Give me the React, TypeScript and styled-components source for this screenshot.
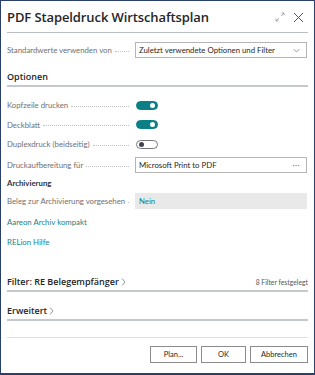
import React from "react";
import styled, { createGlobalStyle } from "styled-components";

const GlobalStyle = createGlobalStyle`
  html, body { margin: 0; padding: 0; background: #ffffff; }
  body { font-family: "Lato", "Open Sans", "Liberation Sans", sans-serif; color: #212121; }
  * { box-sizing: border-box; }
`;

const Frame = styled.div`
  width: 315px;
  height: 375px;
  border: 1px solid #2a3f6b;
  border-bottom: 2px solid #2a3f6b;
  margin: 0;
  padding: 0 6px 0 6px;
  display: flex;
  flex-direction: column;
  background: #fff;
`;

const Header = styled.div`
  height: 32px;
  display: flex;
  align-items: center;
  justify-content: space-between;
  border-bottom: 1px solid #b9bdc5;
  padding-top: 1px;
`;

const Title = styled.div`
  font-family: "Open Sans", "Noto Sans", sans-serif;
  font-size: 13px;
  font-weight: 600;
  color: #262626;
  letter-spacing: -0.1px;
`;

const HeaderIcons = styled.div`
  display: flex;
  align-items: center;
  gap: 8px;
  padding-right: 4px;
`;

const Row = styled.div<{ $mt?: number }>`
  display: grid;
  grid-template-columns: 122px 172px;
  column-gap: 6px;
  align-items: center;
  margin-top: ${(p) => p.$mt ?? 0}px;
  height: 16px;
`;

const LabelCell = styled.div`
  display: flex;
  align-items: center;
  gap: 3px;
  overflow: hidden;
  font-size: 7.8px;
  color: #707070;
  white-space: nowrap;
`;

const Leader = styled.span`
  flex: 1;
  height: 0;
  border-bottom: 1px dotted #c4c4c4;
  margin-top: 2px;
`;

const Box = styled.div<{ $grey?: boolean }>`
  height: 16px;
  border: ${(p) => (p.$grey ? "1px solid #e9e9e9" : "1px solid #b5b5b5")};
  background: ${(p) => (p.$grey ? "#e9e9e9" : "#fff")};
  display: flex;
  align-items: center;
  justify-content: space-between;
  padding: 0 6px 0 3px;
  font-size: 7.8px;
  color: #262626;
  white-space: nowrap;
`;

const TealValue = styled.span`
  color: #0e7e84;
`;

const SectionTitle = styled.div<{ $mt: number }>`
  margin-top: ${(p) => p.$mt}px;
  height: 19px;
  border-bottom: 2px solid #c5c8ce;
  display: flex;
  align-items: center;
  justify-content: space-between;
  font-family: "Open Sans", "Noto Sans", sans-serif;
  font-size: 9px;
  font-weight: 600;
  color: #262626;
`;

const SectionLabel = styled.span`
  display: flex;
  align-items: center;
  gap: 2px;
`;

const FilterNote = styled.span`
  font-family: "Lato", sans-serif;
  font-size: 6.8px;
  font-weight: 400;
  color: #555;
`;

const SubHeading = styled.div<{ $mt: number }>`
  margin-top: ${(p) => p.$mt}px;
  font-size: 7.8px;
  font-weight: 700;
  color: #333;
  height: 12px;
  display: flex;
  align-items: center;
`;

const Link = styled.div<{ $mt: number }>`
  margin-top: ${(p) => p.$mt}px;
  font-size: 7.8px;
  color: #15838a;
  height: 12px;
  display: flex;
  align-items: center;
`;

const Toggle = styled.div<{ $on: boolean }>`
  width: 22px;
  height: 9px;
  border-radius: 5px;
  position: relative;
  margin-left: 1px;
  background: ${(p) => (p.$on ? "#0b7f85" : "#fff")};
  border: 1px solid ${(p) => (p.$on ? "#0b7f85" : "#777")};
  &::after {
    content: "";
    position: absolute;
    top: 1px;
    width: 5px;
    height: 5px;
    border-radius: 50%;
    background: ${(p) => (p.$on ? "#fff" : "#3e4350")};
    ${(p) => (p.$on ? "right: 2px;" : "left: 2px;")}
  }
`;

const Spacer = styled.div`
  flex: 1;
`;

const Footer = styled.div`
  border-top: 1px solid #e2e2e2;
  height: 32px;
  display: flex;
  justify-content: flex-end;
  align-items: center;
  gap: 4px;
  padding-top: 1px;
  margin-bottom: 4px;
`;

const Button = styled.button<{ $w: number }>`
  width: ${(p) => p.$w}px;
  height: 17px;
  background: #fff;
  border: 1px solid #8c8c8c;
  font-family: inherit;
  font-size: 7.5px;
  color: #262626;
  padding: 0;
`;

const Chevron = () => (
  <svg width="7" height="5" viewBox="0 0 7 5">
    <path d="M0.5 1 L3.5 4 L6.5 1" fill="none" stroke="#888" strokeWidth="0.8" />
  </svg>
);

const RightChevron = () => (
  <svg width="5" height="8" viewBox="0 0 5 8">
    <path d="M1 0.5 L4 4 L1 7.5" fill="none" stroke="#888" strokeWidth="0.9" />
  </svg>
);

const LabelRow = ({ label, children, mt }: { label: string; children: React.ReactNode; mt?: number }) => (
  <Row $mt={mt}>
    <LabelCell>
      <span>{label}</span>
      <Leader />
    </LabelCell>
    <div>{children}</div>
  </Row>
);

export default function App() {
  return (
    <>
      <GlobalStyle />
      <Frame>
        <Header>
          <Title>PDF Stapeldruck Wirtschaftsplan</Title>
          <HeaderIcons>
            <svg width="10" height="10" viewBox="0 0 10 10">
              <path d="M1 9 L4 6 M6 4 L9 1 M6.5 1 H9 V3.5 M1 6.5 V9 H3.5" fill="none" stroke="#999" strokeWidth="0.8" />
            </svg>
            <svg width="11" height="11" viewBox="0 0 11 11">
              <path d="M1 1 L10 10 M10 1 L1 10" fill="none" stroke="#555" strokeWidth="1" />
            </svg>
          </HeaderIcons>
        </Header>

        <LabelRow label="Standardwerte verwenden von" mt={9}>
          <Box>
            <span>Zuletzt verwendete Optionen und Filter</span>
            <Chevron />
          </Box>
        </LabelRow>

        <SectionTitle $mt={10}>Optionen</SectionTitle>

        <LabelRow label="Kopfzeile drucken" mt={10}>
          <Toggle $on />
        </LabelRow>
        <LabelRow label="Deckblatt" mt={3.5}>
          <Toggle $on />
        </LabelRow>
        <LabelRow label="Duplexdruck (beidseitig)" mt={3.5}>
          <Toggle $on={false} />
        </LabelRow>
        <LabelRow label="Druckaufbereitung für" mt={5}>
          <Box>
            <span>Microsoft Print to PDF</span>
            <span style={{ color: "#666", letterSpacing: "0.5px" }}>···</span>
          </Box>
        </LabelRow>

        <SubHeading $mt={4}>Archivierung</SubHeading>

        <LabelRow label="Beleg zur Archivierung vorgesehen" mt={4}>
          <Box $grey>
            <TealValue>Nein</TealValue>
          </Box>
        </LabelRow>

        <Link $mt={7}>Aareon Archiv kompakt</Link>
        <Link $mt={8}>RELion Hilfe</Link>

        <SectionTitle $mt={25}>
          <SectionLabel>
            Filter: RE Belegempfänger
            <RightChevron />
          </SectionLabel>
          <FilterNote>8 Filter festgelegt</FilterNote>
        </SectionTitle>

        <SectionTitle $mt={10}>
          <SectionLabel>
            Erweitert
            <RightChevron />
          </SectionLabel>
        </SectionTitle>

        <Spacer />

        <Footer>
          <Button $w={47}>Plan...</Button>
          <Button $w={45}>OK</Button>
          <Button $w={58}>Abbrechen</Button>
        </Footer>
      </Frame>
    </>
  );
}
